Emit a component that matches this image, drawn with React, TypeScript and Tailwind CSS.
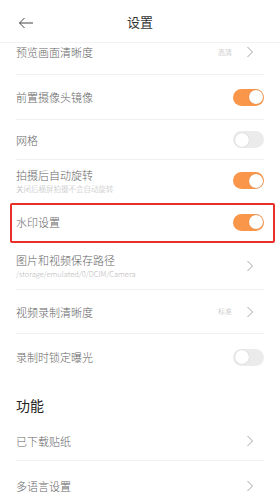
import React from "react";

const font = { fontFamily: '"Noto Sans CJK SC", "Noto Sans", sans-serif' };

function Toggle({ on }: { on: boolean }) {
  return (
    <div
      className={
        "relative w-[31px] h-[17px] rounded-full shrink-0 " +
        (on ? "bg-[#f9964a]" : "bg-[#ebebeb]")
      }
    >
      <div
        className={
          "absolute top-[1.5px] w-[14px] h-[14px] rounded-full bg-white shadow-[0_0_1px_rgba(0,0,0,0.25)] " +
          (on ? "right-[1.5px]" : "left-[1.5px]")
        }
      />
    </div>
  );
}

function Chevron() {
  return (
    <svg width="8" height="12" viewBox="0 0 8 12" className="shrink-0 mr-[10px]">
      <path d="M1.5 1 L6.5 6 L1.5 11" fill="none" stroke="#a6a6a6" strokeWidth="1" />
    </svg>
  );
}

function Divider() {
  return <div className="mx-4 h-px bg-[#f0f0f0]" />;
}

function Row({
  h,
  title,
  sub,
  right,
  value,
  className = "",
}: {
  h: string;
  title: string;
  sub?: string;
  right: "on" | "off" | "chev";
  value?: string;
  className?: string;
}) {
  return (
    <div className={"flex items-center px-4 " + h + " " + className}>
      <div className="flex-1 min-w-0 flex flex-col">
        <div className="text-[11px] leading-[14px] text-[#666666] font-light">{title}</div>
        {sub && (
          <div className="text-[7.5px] leading-[10px] text-[#b8b8b8] mt-[2px] font-light">{sub}</div>
        )}
      </div>
      {value && <div className="text-[7px] text-[#b0b0b0] mr-[14px] font-light">{value}</div>}
      {right === "chev" ? <Chevron /> : <Toggle on={right === "on"} />}
    </div>
  );
}

export default function App() {
  return (
    <div className="w-[280px] h-[500px] bg-white overflow-hidden relative" style={font}>
      <div className="relative z-10 h-[43px] bg-white flex items-center border-b border-[#f2f2f2]">
        <svg width="16" height="12" viewBox="0 0 16 12" className="absolute left-[18px] top-[17px]">
          <path d="M15 6 H1.5 M6.5 1 L1.5 6 L6.5 11" fill="none" stroke="#444" strokeWidth="1" />
        </svg>
        <div className="w-full text-center text-[13px] text-[#333333] leading-[18px] mt-[2px]">设置</div>
      </div>
      <div className="overflow-hidden">
        <div className="mt-[-13px]">
          <Row h="h-[44px]" title="预览画面清晰度" right="chev" value="高清" />
        </div>
        <Divider />
        <Row h="h-[44px]" title="前置摄像头镜像" right="on" />
        <Divider />
        <Row h="h-[39px]" title="网格" right="off" />
        <Divider />
        <Row h="h-[41px]" title="拍摄后自动旋转" sub="关闭后横屏拍摄不会自动旋转" right="on" />
        <div className="relative">
          <Row h="h-[42px]" title="水印设置" right="on" />
          <div className="absolute left-[10px] right-[5px] top-[2px] h-[40px] border-2 border-[#e8302a] rounded-[2px]" />
        </div>
        <Row
          h="h-[46px]"
          title="图片和视频保存路径"
          sub="/storage/emulated/0/DCIM/Camera"
          right="chev"
        />
        <Divider />
        <Row h="h-[43px]" title="视频录制清晰度" right="chev" value="标准" />
        <Divider />
        <Row h="h-[46px]" title="录制时锁定曝光" right="off" />
        <div className="h-[42px] px-4 pt-[16px]">
          <div className="text-[14px] leading-[18px] text-[#222222]">功能</div>
        </div>
        <Row h="h-[38px]" title="已下载贴纸" right="chev" />
        <Divider />
        <Row h="h-[50px]" title="多语言设置" right="chev" />
      </div>
    </div>
  );
}
